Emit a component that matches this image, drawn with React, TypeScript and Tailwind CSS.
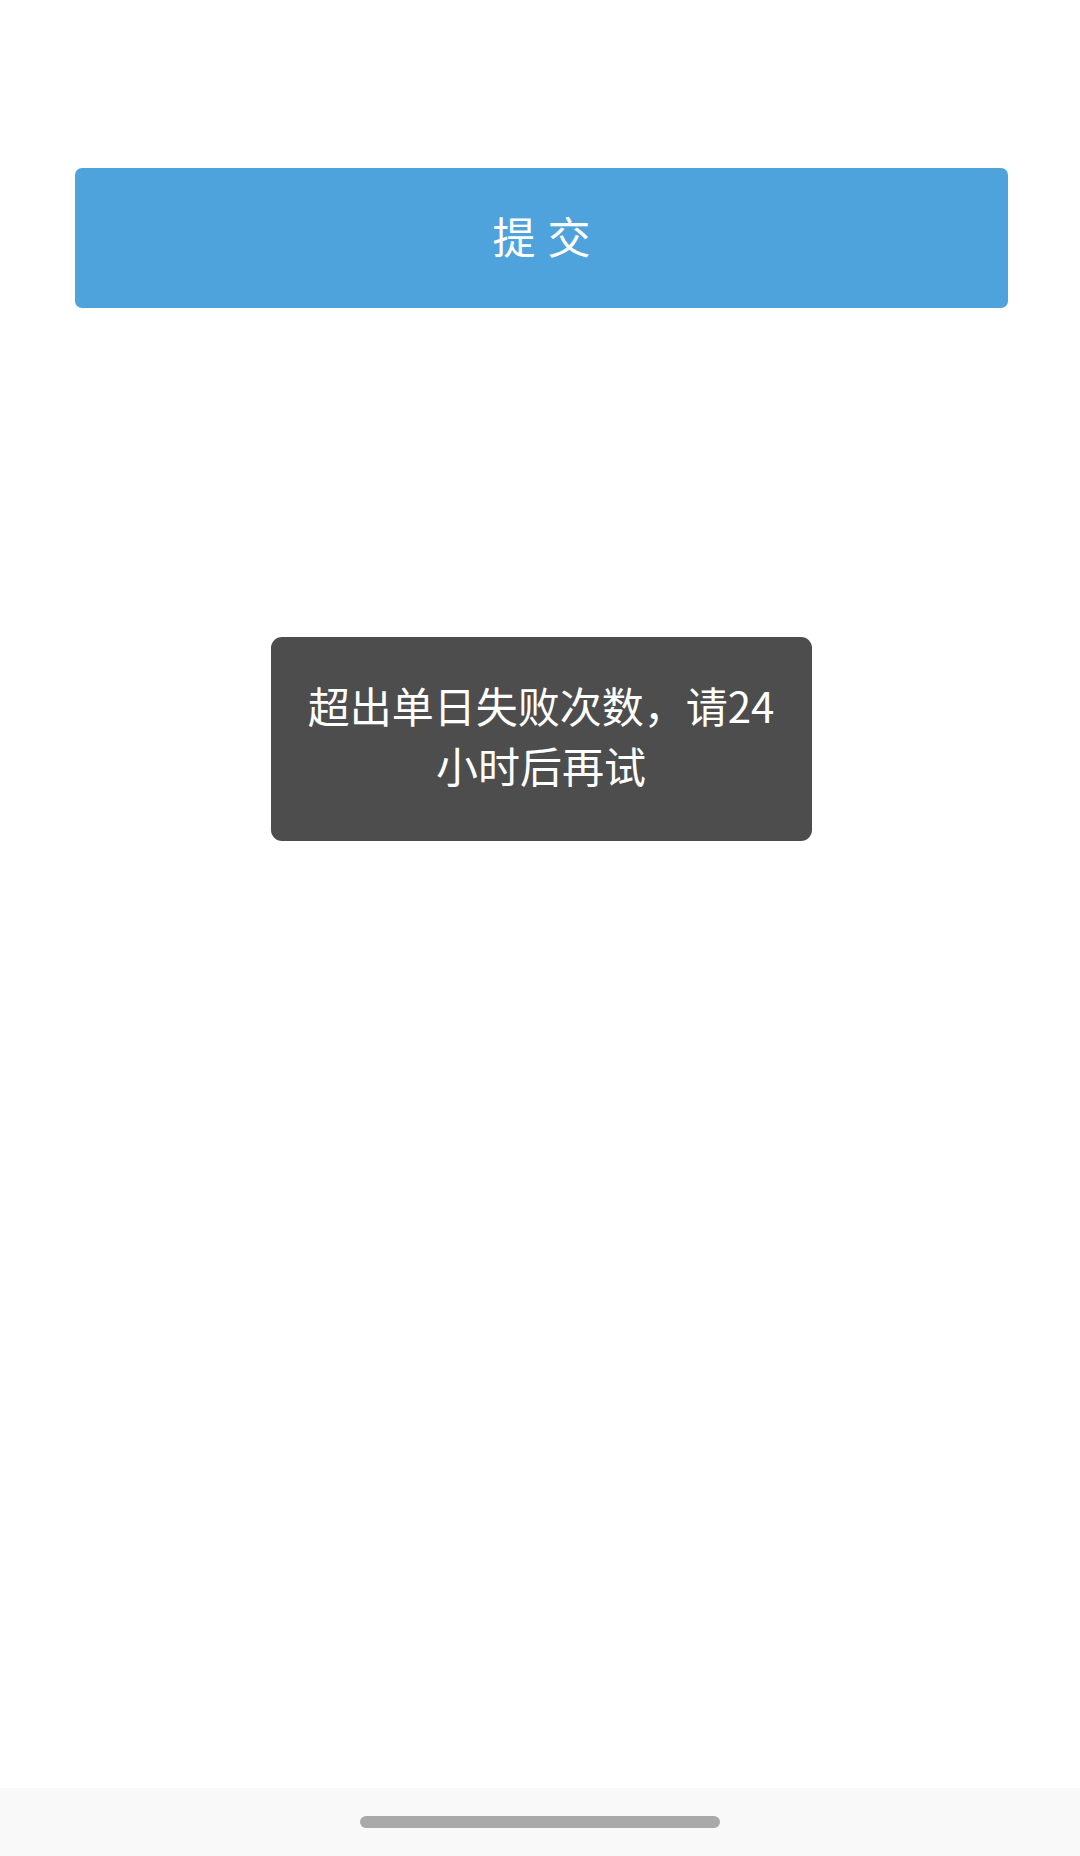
export default function App() {
  return (
    <div
      className="relative flex h-[1856px] w-[1080px] flex-col bg-white"
      style={{ fontFamily: '"Noto Sans CJK SC", "Noto Sans", sans-serif' }}
    >
      <main className="flex-1 pl-[75px] pr-[72px] pt-[168px]">
        <button className="flex h-[140px] w-full items-center justify-center rounded-[7px] bg-[#4fa3dc] pb-[5px] text-[43px] tracking-[12px] text-white">
          <span className="pl-[12px]">提交</span>
        </button>
      </main>

      {/* toast */}
      <div className="absolute left-0 right-0 top-[637px] flex justify-center pl-[2px]">
        <div className="w-[541px] rounded-[11px] bg-[#4d4d4d] px-[33px] pb-[46px] pt-[38px] text-center text-[42px] leading-[60px] text-white">
          超出单日失败次数，请24
          <br />
          小时后再试
        </div>
      </div>

      <footer className="flex h-[68px] items-center justify-center bg-[#f9f9f9]">
        <div className="h-[12px] w-[360px] rounded-full bg-[#a9a9a9]" />
      </footer>
    </div>
  );
}
